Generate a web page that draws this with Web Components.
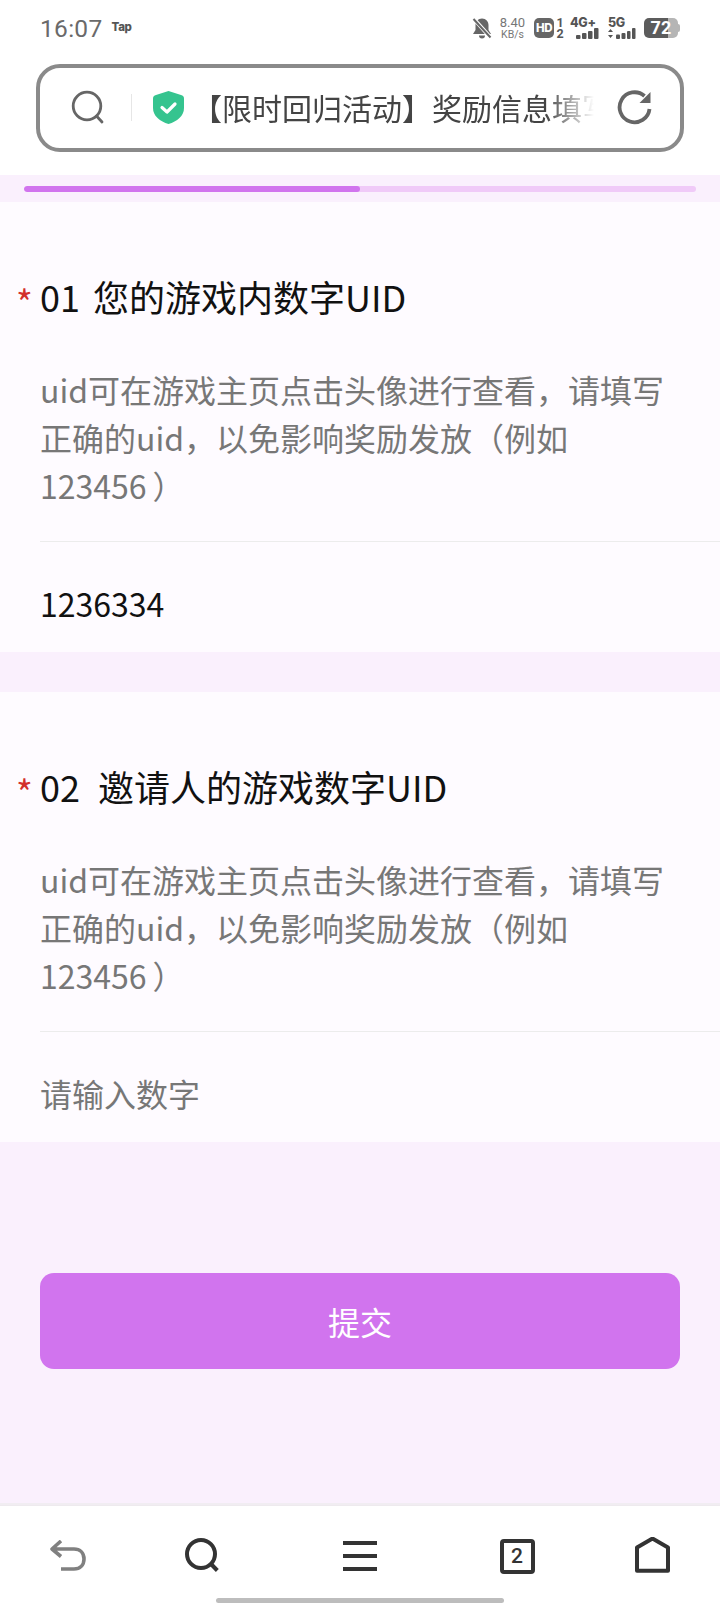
<!DOCTYPE html>
<html lang="zh-CN"><head><meta charset="utf-8"><title>限时回归活动</title>
<style>
html,body{margin:0;padding:0}
body{width:720px;height:1605px;overflow:hidden;display:flex;flex-direction:column;background:#fff;font-family:"Noto Sans CJK SC","Noto Sans",sans-serif}
.ln{display:block}
.pc{margin-left:6px}
</style></head><body>
<status-bar></status-bar>
<address-bar>【限时回归活动】奖励信息填写</address-bar>
<form-page>
  <form-question num="01" gap="-3" title="您的游戏内数字UID" value="1236334"><span class="ln">uid可在游戏主页点击头像进行查看，请填写</span><span class="ln">正确的uid，以免影响奖励发放（例如</span><span class="ln">123456<span class="pc">）</span></span></form-question>
  <form-question num="02" gap="2" title="邀请人的游戏数字UID" placeholder="请输入数字"><span class="ln">uid可在游戏主页点击头像进行查看，请填写</span><span class="ln">正确的uid，以免影响奖励发放（例如</span><span class="ln">123456<span class="pc">）</span></span></form-question>
  <submit-button>提交</submit-button>
</form-page>
<bottom-nav></bottom-nav>
<script>
function def(name, html){
  customElements.define(name, class extends HTMLElement{
    connectedCallback(){
      if(this.shadowRoot) return;
      const r=this.attachShadow({mode:'open'});
      r.innerHTML=typeof html==='function'?html(this):html;
    }
  });
}
def('status-bar',`<style>
:host{display:flex;align-items:center;height:56px;padding:0 40px;box-sizing:border-box;color:#666;flex:none}
.t{font:400 24.5px "Roboto","Noto Sans",sans-serif;letter-spacing:.3px;color:#6a6a6a}
.tap{font:800 11.5px "Inter",sans-serif;color:#555;margin-left:9px;margin-top:-3px;letter-spacing:-.3px}
.sp{flex:1}
.r{display:flex;align-items:center}
.spd{display:flex;flex-direction:column;align-items:center;width:27px;margin-left:7px;font:400 13px/12px "Roboto",sans-serif;color:#777}
.spd small{font-size:10.5px;line-height:11px}
.hd{width:20px;height:20px;border-radius:5px;background:#666;color:#fff;font:800 11.5px/20px "Inter",sans-serif;text-align:center;margin-left:8px;letter-spacing:-.5px;overflow:hidden}
.sim{display:flex;flex-direction:column;font:700 12.5px/11px "Roboto",sans-serif;color:#555;margin-left:2px;width:8px;text-align:center}
.net{display:flex;flex-direction:column;margin-left:6px;height:22px;width:30px}
.net b{font:800 12.5px/11px "Inter",sans-serif;color:#555;letter-spacing:-.3px}
.net svg{display:block}
.net.g5{margin-left:8px}
.bat{display:flex;align-items:center;margin-left:6px}
.bat i{display:block;width:34px;height:20px;border-radius:5px;background:linear-gradient(90deg,#5c5c5c 0,#5c5c5c 70%,#b5b5b5 70%,#b5b5b5 100%);color:#fff;font:700 18px/20px "Roboto",sans-serif;text-align:center;font-style:normal;letter-spacing:.2px}
.bat u{display:block;width:2px;height:8px;background:#b5b5b5;border-radius:0 2px 2px 0}
</style>
<span class="t">16:07</span><span class="tap">Tap</span><span class="sp"></span>
<span class="r">
<svg width="20" height="22" viewBox="0 0 20 22"><path d="M10 1.500c-4 0-6.500 3-6.500 6.500v5L1 17h18l-2.500-4V8c0-3.500-2.500-6.500-6.500-6.500z" fill="#666"/><path d="M7 18.500h6a3 3 0 0 1-6 0z" fill="#666"/><path d="M1.500 1.500 18.500 20.500" stroke="#fff" stroke-width="4"/><path d="M1.500 2 18.500 20.500" stroke="#666" stroke-width="2"/></svg>
<span class="spd">8.40<small>KB/s</small></span>
<span class="hd">HD</span>
<span class="sim"><span>1</span><span>2</span></span>
<span class="net"><b>4G+</b><svg width="30" height="11" viewBox="0 0 30 11" fill="#555"><rect x="6" y="7" width="4.500" height="4" rx="1"/><rect x="12" y="5" width="4.500" height="6" rx="1"/><rect x="18" y="3" width="4.500" height="8" rx="1"/><rect x="24" y="0" width="4.500" height="11" rx="1"/></svg></span>
<span class="net g5"><b>5G</b><svg width="30" height="11" viewBox="0 0 30 11" fill="#555"><path d="M2.500 1 5 4H0zM2.500 10 0 7h5z"/><rect x="8" y="6.500" width="4" height="4.500" rx="1"/><rect x="13.500" y="5" width="4" height="6" rx="1"/><rect x="19" y="3" width="3.500" height="8" rx="1"/><rect x="24" y="0" width="3.500" height="11" rx="1"/></svg></span>
<span class="bat"><i>72</i><u></u></span>
</span>`);
def('address-bar',`<style>
:host{display:block;flex:none;height:119px;box-sizing:border-box;padding:8px 36px 0;background:#fff}
.b{height:88px;box-sizing:border-box;border:4px solid #8a8a8a;border-radius:24px;display:flex;align-items:center;padding:0 0 2px 30px}
svg{display:block;flex:none}
.d{width:1px;height:27px;background:#e6e6e6;margin:0 21px 0 25px;flex:none}
.t{flex:none;width:402px;margin:0 0 1px 8px;overflow:hidden;white-space:nowrap;font-size:30px;line-height:40px;color:#444;-webkit-mask-image:linear-gradient(90deg,#000 88%,transparent 100%);mask-image:linear-gradient(90deg,#000 88%,transparent 100%)}
.rf{margin-left:22px}
</style><div class="b">
<svg width="36" height="36" viewBox="0 0 36 36" fill="none" stroke="#666" stroke-width="2.800"><circle cx="17" cy="17" r="13.800"/><path d="M26.500 27 32 33" stroke-linecap="round"/></svg>
<span class="d"></span>
<svg width="31" height="33" viewBox="0 0 31 33"><path d="M15.500 0 28 4c2 .7 3 1.800 3 3.500V17c0 8-7 13.500-15.500 16C7 30.500 0 25 0 17V7.500C0 5.800 1 4.700 3 4z" fill="#35c48f"/><path d="M9 16.500l5 4.500 8-8" fill="none" stroke="#fff" stroke-width="3.200" stroke-linecap="round" stroke-linejoin="round"/></svg>
<span class="t"><slot></slot></span>
<svg class="rf" width="36" height="38" viewBox="0 0 36 38"><path d="M33.500 21A15 15 0 1 1 28.500 8" fill="none" stroke="#666" stroke-width="3.800"/><path d="M34.500 4V15H23.500z" fill="#666"/></svg>
</div>`);
def('form-page',`<style>
:host{display:block;flex:1;background:#faf0fd;min-height:0;box-sizing:border-box}
.p{height:27px;box-sizing:border-box;padding:11px 24px 0}
.tr{height:6px;border-radius:3px;background:#f0caf8;overflow:hidden}
.f{display:block;height:6px;width:336px;background:#d174ee;border-radius:3px}
.l{display:flex;flex-direction:column;gap:40px}
</style><div class="p"><div class="tr"><span class="f"></span></div></div><div class="l"><slot></slot></div>`);
def('form-question',h=>{
 const n=h.getAttribute('num'),t=h.getAttribute('title'),v=h.getAttribute('value'),ph=h.getAttribute('placeholder'),g=h.getAttribute('gap')||0;
 return `<style>
:host{display:block;background:#fefbff;height:450px;box-sizing:border-box;padding:70px 0 0 16px}
.q{display:flex;height:48px;font-size:36px;line-height:48px;color:#111}
.s{width:24px;flex:none;color:#d32f2b;font-size:36px;line-height:59px}
.n{margin-right:${g}px}
.d{margin:45px 0 0 24px;font-size:32px;line-height:48px;color:#777;width:640px}
.i{margin:32px 0 0 24px;border-top:1px solid #ececec;height:110px;font-size:32px;line-height:123px;color:${v?'#111':'#777'}}
</style><div class="q"><span class="s">*</span><span><span class="n">${n}</span>&nbsp;&nbsp;${t}</span></div>
<div class="d"><slot></slot></div><div class="i">${v||ph}</div>`;
});
def('submit-button',`<style>
:host{display:block;margin:91px 40px 0}
.b{height:96px;border-radius:14px;background:#d174ee;color:#fff;font-size:32px;display:flex;align-items:center;justify-content:center}
</style><div class="b"><slot></slot></div>`);
def('bottom-nav',`<style>
:host{display:flex;flex-direction:column;flex:none;height:100px;background:#fff;border-top:1px solid #eeeaee;box-sizing:border-box;box-shadow:0 -2px 0 #f1edf2}
.g{display:grid;grid-template-columns:135px 134px 182px 132px 137px;height:92px;box-sizing:border-box;padding-top:8px;align-items:center;justify-items:center}
svg{display:block}
.tab{width:35px;height:35px;box-sizing:border-box;border:4px solid #333;border-radius:4px;display:flex;align-items:center;justify-content:center;font:500 21px/1 "Roboto",sans-serif;color:#333}
.h{width:288px;height:5px;border-radius:3px;background:#bdbdbd;margin:0 auto}
</style><div class="g">
<svg width="36" height="32" viewBox="0 0 36 32" fill="none" stroke="#808080" stroke-width="3.600"><path d="M11 1 2 9l9 7.500M2 9h22c6 0 10 4 10 10s-4 10-10 10H11" stroke-linejoin="round"/></svg>
<svg width="36" height="38" viewBox="0 0 36 38" fill="none" stroke="#333" stroke-width="4"><circle cx="17" cy="17" r="14"/><path d="M26.500 26.500 33.300 33.500"/></svg>
<svg width="34" height="32" viewBox="0 0 34 32" fill="none" stroke="#333" stroke-width="4"><path d="M0 3h34M0 16h34M0 29h34"/></svg>
<span class="tab">2</span>
<svg width="38" height="38" viewBox="0 0 38 38" fill="none" stroke="#333" stroke-width="4" stroke-linejoin="round"><path d="M19.500 1.500 35 10.500V33.700H4V10.500z"/></svg>
</div><div class="h"></div>`);
</script>
</body></html>
